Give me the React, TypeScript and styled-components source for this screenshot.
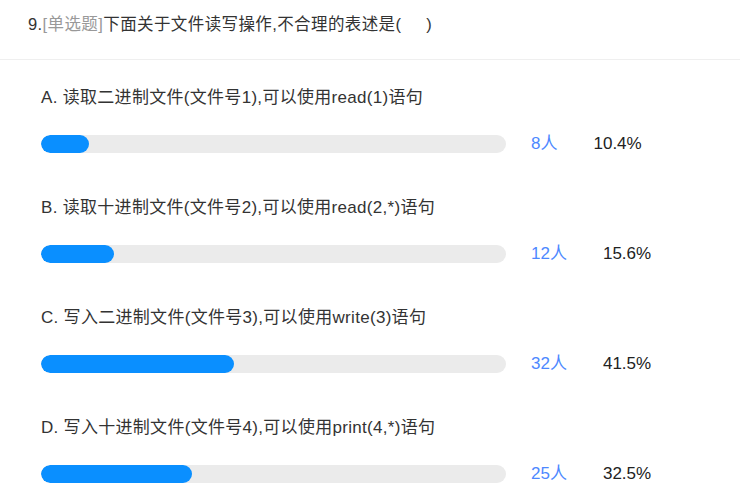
import React from "react";
import styled, { createGlobalStyle } from "styled-components";

const GlobalStyle = createGlobalStyle`
  html, body {
    margin: 0;
    padding: 0;
    background: #ffffff;
  }
  body {
    font-family: "Liberation Sans", Arial, "Noto Sans CJK SC", sans-serif;
    color: #333333;
  }
`;

const Page = styled.div`
  width: 740px;
  background: #fff;
`;

const Header = styled.div`
  height: 60px;
  box-sizing: border-box;
  padding: 12px 0 0 28px;
  border-bottom: 1px solid #efefef;
  font-size: 16.5px;
  letter-spacing: 0.4px;
  line-height: 24px;
  color: #333;
  white-space: pre;
`;

const Tag = styled.span`
  color: #999999;
`;

const OptionList = styled.div`
  display: flex;
  flex-direction: column;
  gap: 40px;
  padding: 26px 0 0 41px;
`;

const Option = styled.div`
  display: flex;
  flex-direction: column;
  gap: 22px;
`;

const OptionText = styled.div`
  font-size: 17px;
  letter-spacing: 0.3px;
  line-height: 24px;
  color: #333;
  white-space: pre;
`;

const StatRow = styled.div`
  display: flex;
  align-items: center;
  height: 24px;
`;

const Track = styled.div`
  width: 465px;
  height: 18px;
  border-radius: 9px;
  background: #ebebeb;
  overflow: hidden;
  flex: none;
`;

const Fill = styled.div`
  height: 100%;
  border-radius: 9px;
  background: #0a8fff;
`;

const Count = styled.span`
  margin-left: 25px;
  font-size: 17px;
  line-height: 24px;
  color: #4d88ff;
`;

const Percent = styled.span`
  margin-left: 36px;
  font-size: 17px;
  line-height: 24px;
  color: #222;
`;

const options = [
  { label: "A. 读取二进制文件(文件号1),可以使用read(1)语句", count: 8, pct: 10.4 },
  { label: "B. 读取十进制文件(文件号2),可以使用read(2,*)语句", count: 12, pct: 15.6 },
  { label: "C. 写入二进制文件(文件号3),可以使用write(3)语句", count: 32, pct: 41.5 },
  { label: "D. 写入十进制文件(文件号4),可以使用print(4,*)语句", count: 25, pct: 32.5 },
];

export default function App() {
  return (
    <Page>
      <GlobalStyle />
      <Header>
        9.<Tag>[单选题]</Tag>下面关于文件读写操作,不合理的表述是(     )
      </Header>
      <OptionList>
        {options.map((o) => (
          <Option key={o.label}>
            <OptionText>{o.label}</OptionText>
            <StatRow>
              <Track>
                <Fill style={{ width: `${o.pct}%` }} />
              </Track>
              <Count>{o.count}人</Count>
              <Percent>{o.pct.toFixed(1)}%</Percent>
            </StatRow>
          </Option>
        ))}
      </OptionList>
    </Page>
  );
}
